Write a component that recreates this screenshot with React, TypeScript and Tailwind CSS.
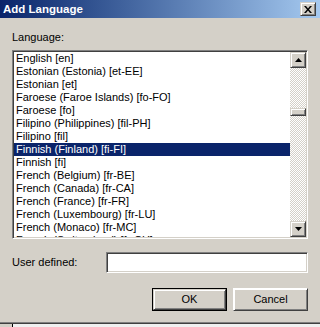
import React from 'react';

const languages: string[] = [
    'English [en]',
    'Estonian (Estonia) [et-EE]',
    'Estonian [et]',
    'Faroese (Faroe Islands) [fo-FO]',
    'Faroese [fo]',
    'Filipino (Philippines) [fil-PH]',
    'Filipino [fil]',
    'Finnish (Finland) [fi-FI]',
    'Finnish [fi]',
    'French (Belgium) [fr-BE]',
    'French (Canada) [fr-CA]',
    'French (France) [fr-FR]',
    'French (Luxembourg) [fr-LU]',
    'French (Monaco) [fr-MC]',
    'French (Switzerland) [fr-CH]',
];

const raised =
    'border border-t-[#d4d0c8] border-l-[#d4d0c8] border-r-[#404040] border-b-[#404040] shadow-[inset_1px_1px_#ffffff,inset_-1px_-1px_#808080] bg-[#d4d0c8]';
const sunken =
    'border border-t-[#808080] border-l-[#808080] border-r-white border-b-white shadow-[inset_1px_1px_#404040,inset_-1px_-1px_#d4d0c8] bg-white';

const Arrow: React.FC<{ down?: boolean }> = ({ down }) => (
    <svg width="7" height="4" viewBox="0 0 7 4">
        {down ? <polygon points="0,0 7,0 3.5,4" fill="#000" /> : <polygon points="3.5,0 7,4 0,4" fill="#000" />}
    </svg>
);

const App: React.FC = () => {
    const selected = 'Finnish (Finland) [fi-FI]';

    return (
        <div className="w-[320px] h-[327px] overflow-hidden bg-[#d4d0c8] flex flex-col font-['Liberation_Sans',Arial,sans-serif] text-[11px] leading-[13px] text-black">
            {/* title bar */}
            <div className="h-[18px] shrink-0 flex items-center justify-between pl-[3px] pr-[4px] bg-gradient-to-r from-[#0a246a] to-[#a6caf0]">
                <span className="text-white font-bold text-[11.5px]">Add Language</span>
                <div className={`w-[16px] h-[14px] flex items-center justify-center ${raised}`}>
                    <svg width="8" height="7" viewBox="0 0 8 7">
                        <path d="M0 0h2l2 2.5L6 0h2L5 3.5 8 7H6L4 4.5 2 7H0l3-3.5z" fill="#000" />
                    </svg>
                </div>
            </div>

            <div className="flex-1 flex flex-col px-[12px] pr-[12px]">
                <div className="mt-[13px]">Language:</div>

                {/* list box */}
                <div className={`mt-[6px] h-[189px] flex ${sunken} p-[1px]`}>
                    <div className="flex-1 overflow-hidden">
                        {languages.map((lang) => (
                            <div
                                key={lang}
                                className={`h-[13px] pl-[2px] whitespace-nowrap ${
                                    lang === selected ? 'bg-[#0a246a] text-white' : ''
                                }`}
                            >
                                {lang}
                            </div>
                        ))}
                    </div>
                    <div className="w-[16px] flex flex-col bg-[repeating-conic-gradient(#d4d0c8_0%_25%,#ffffff_0%_50%)] bg-[length:2px_2px]">
                        <div className={`h-[16px] flex items-center justify-center ${raised}`}>
                            <Arrow />
                        </div>
                        <div className="flex-1 pt-[40px]">
                            <div className={`h-[8px] ${raised}`} />
                        </div>
                        <div className={`h-[16px] flex items-center justify-center ${raised}`}>
                            <Arrow down />
                        </div>
                    </div>
                </div>

                {/* user defined */}
                <div className="mt-[13px] flex items-center justify-between">
                    <span>User defined:</span>
                    <div className={`w-[202px] h-[21px] ${sunken}`} />
                </div>

                {/* buttons */}
                <div className="mt-[15px] flex justify-end gap-[6px]">
                    <button className="w-[75px] h-[23px] border border-black p-0">
                        <div className={`w-full h-full flex items-center justify-center ${raised}`}>OK</div>
                    </button>
                    <button className={`w-[75px] h-[23px] flex items-center justify-center border-t-white border-l-white ${raised} shadow-[inset_-1px_-1px_#808080]`}>
                        Cancel
                    </button>
                </div>
            </div>

            {/* dialog bottom edge and what lies behind */}
            <div className="h-[1px] shrink-0 bg-[#808080]" />
            <div className="h-[1px] shrink-0 bg-[#404040]" />
            <div className="h-[3px] shrink-0 flex">
                <div className="w-[12px] bg-[#d4d0c8]" />
                <div className="w-[1px] bg-black" />
                <div className="flex-1 bg-[#f0f0f0]" />
            </div>
        </div>
    );
};

export default App;
